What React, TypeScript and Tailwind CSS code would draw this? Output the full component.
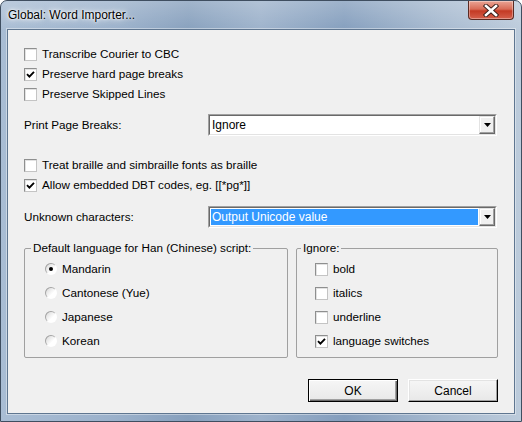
import React from "react";

function CheckBox({ checked }: { checked?: boolean }) {
    return (
        <span className="w-[13px] h-[13px] shrink-0 flex items-center justify-center bg-white border border-[#8e8f8f] border-b-[#c4c4c4] border-r-[#c4c4c4] shadow-[inset_1px_1px_0_#e2e2e2]">
            {checked && (
                <svg width="9" height="9" viewBox="0 0 9 9">
                    <path d="M1 4.2 L3.4 6.6 L8 1.8" fill="none" stroke="#000" strokeWidth="1.9" />
                </svg>
            )}
        </span>
    );
}

function Radio({ checked }: { checked?: boolean }) {
    return (
        <span className="w-[12px] h-[12px] shrink-0 rounded-full bg-[linear-gradient(135deg,#8c8c8c_0%,#b4b4b4_45%,#ffffff_55%,#ffffff_100%)] flex items-center justify-center">
            <span className="w-[10px] h-[10px] rounded-full bg-[linear-gradient(135deg,#d6d6d6_0%,#ffffff_60%)] flex items-center justify-center">
                {checked && <span className="w-[4px] h-[4px] rounded-full bg-black" />}
            </span>
        </span>
    );
}

function Select({ value, selected }: { value: string; selected?: boolean }) {
    return (
        <div className="w-[289px] h-[22px] flex border border-[#a0a0a0] border-b-white border-r-white">
            <div className="flex-1 flex border border-[#696969] border-b-[#e3e3e3] border-r-[#e3e3e3] bg-white">
                <div className="flex-1 flex items-center p-px">
                    <span
                        className={`h-full flex-1 flex items-center px-px text-[12px] ${selected ? "bg-[#3399ff] text-white" : ""}`}
                    >
                        {value}
                    </span>
                </div>
                <div className="w-[16px] h-full flex items-center justify-center bg-[#f0f0f0] border border-[#e3e3e3] border-b-[#696969] border-r-[#696969] shadow-[inset_-1px_-1px_0_#a0a0a0,inset_1px_1px_0_#fff]">
                    <svg width="7" height="4" viewBox="0 0 7 4">
                        <path d="M0 0 H7 L3.5 4 Z" fill="#000" />
                    </svg>
                </div>
            </div>
        </div>
    );
}

function Button({ label, isDefault }: { label: string; isDefault?: boolean }) {
    return (
        <button
            type="button"
            className={`w-[90px] h-[23px] flex items-center justify-center text-[12px] bg-[linear-gradient(#f6f6f6,#e8e8e8)] ${
                isDefault
                    ? "border border-black shadow-[inset_1px_1px_0_#fff,inset_-1px_-1px_0_#696969,inset_-2px_-2px_0_#a0a0a0]"
                    : "border border-white border-b-black border-r-black shadow-[inset_-1px_-1px_0_#a0a0a0,inset_1px_1px_0_#e3e3e3]"
            }`}
        >
            {label}
        </button>
    );
}

function CheckRow({ label, checked }: { label: string; checked?: boolean }) {
    return (
        <div className="h-[20px] flex items-center gap-[5px]">
            <CheckBox checked={checked} />
            <span>{label}</span>
        </div>
    );
}

export default function App() {
    return (
        <div className="w-[522px] h-[422px] flex flex-col rounded-t-[7px] border border-[#3f4e60] bg-[linear-gradient(to_right,#a9bdd4_0%,#9bb1cb_22%,#87a0bd_36%,#9db2cb_50%,#849ebd_66%,#a6b9cf_84%,#bccbdb_100%)] font-['Liberation_Sans',Arial,sans-serif] text-[11.7px] text-black overflow-hidden">
            {/* title bar */}
            <div className="h-[28px] shrink-0 flex items-start justify-between bg-[linear-gradient(rgba(255,255,255,0.22),rgba(255,255,255,0.02))]">
                <span className="pl-[7px] pt-[6px] text-[12px] leading-[16px] [text-shadow:0_0_8px_#fff,0_0_4px_#fff,0_0_2px_#fff]">
                    Global: Word Importer...
                </span>
                <div className="mr-[7px] w-[46px] h-[19px] rounded-b-[4px] border border-t-0 border-[#5b2a22] bg-[linear-gradient(#eaa595_0%,#d86c57_45%,#c43a24_55%,#d5604c_100%)] shadow-[inset_0_0_0_1px_rgba(255,255,255,0.35)] flex items-center justify-center">
                    <svg width="16" height="13" viewBox="0 0 16 13">
                        <path d="M3 2 L13 11 M13 2 L3 11" stroke="#3a1e1a" strokeWidth="4.4" strokeLinecap="square" />
                        <path d="M3 2 L13 11 M13 2 L3 11" stroke="#fff" strokeWidth="2.6" strokeLinecap="square" />
                    </svg>
                </div>
            </div>

            {/* client area */}
            <div className="flex-1 mx-[6px] mb-[7px] border border-[#5f7690] bg-[#f0f0f0] pt-[14px] pb-[11px] px-[16px] flex flex-col shadow-[0_0_0_1px_rgba(255,255,255,0.4)]">
                <CheckRow label="Transcribe Courier to CBC" />
                <CheckRow label="Preserve hard page breaks" checked />
                <CheckRow label="Preserve Skipped Lines" />

                <div className="h-[22px] mt-[10px] flex items-center">
                    <span className="w-[184px]">Print Page Breaks:</span>
                    <Select value="Ignore" />
                </div>

                <div className="mt-[19px]">
                    <CheckRow label="Treat braille and simbraille fonts as braille" />
                    <CheckRow label="Allow embedded DBT codes, eg. [[*pg*]]" checked />
                </div>

                <div className="h-[22px] mt-[11px] flex items-center">
                    <span className="w-[184px]">Unknown characters:</span>
                    <Select value="Output Unicode value" selected />
                </div>

                <div className="mt-[13px] h-[117px] flex gap-[8px]">
                    <fieldset className="w-[264px] h-full border border-[#a0a0a0] rounded-[2px]">
                        <legend className="ml-[6px] px-[2px] leading-[14px]">
                            Default language for Han (Chinese) script:
                        </legend>
                        <div className="pl-[20px] pt-[2px]">
                            {["Mandarin", "Cantonese (Yue)", "Japanese", "Korean"].map((l, i) => (
                                <div key={l} className="h-[24px] flex items-center gap-[5px]">
                                    <Radio checked={i === 0} />
                                    <span>{l}</span>
                                </div>
                            ))}
                        </div>
                    </fieldset>
                    <fieldset className="flex-1 h-full border border-[#a0a0a0] rounded-[2px]">
                        <legend className="ml-[4px] px-[2px] leading-[14px]">Ignore:</legend>
                        <div className="pl-[18px] pt-[2px]">
                            {["bold", "italics", "underline", "language switches"].map((l, i) => (
                                <div key={l} className="h-[24px] flex items-center gap-[5px]">
                                    <CheckBox checked={i === 3} />
                                    <span>{l}</span>
                                </div>
                            ))}
                        </div>
                    </fieldset>
                </div>

                <div className="mt-[21px] flex justify-end gap-[10px]">
                    <Button label="OK" isDefault />
                    <Button label="Cancel" />
                </div>
            </div>
        </div>
    );
}
